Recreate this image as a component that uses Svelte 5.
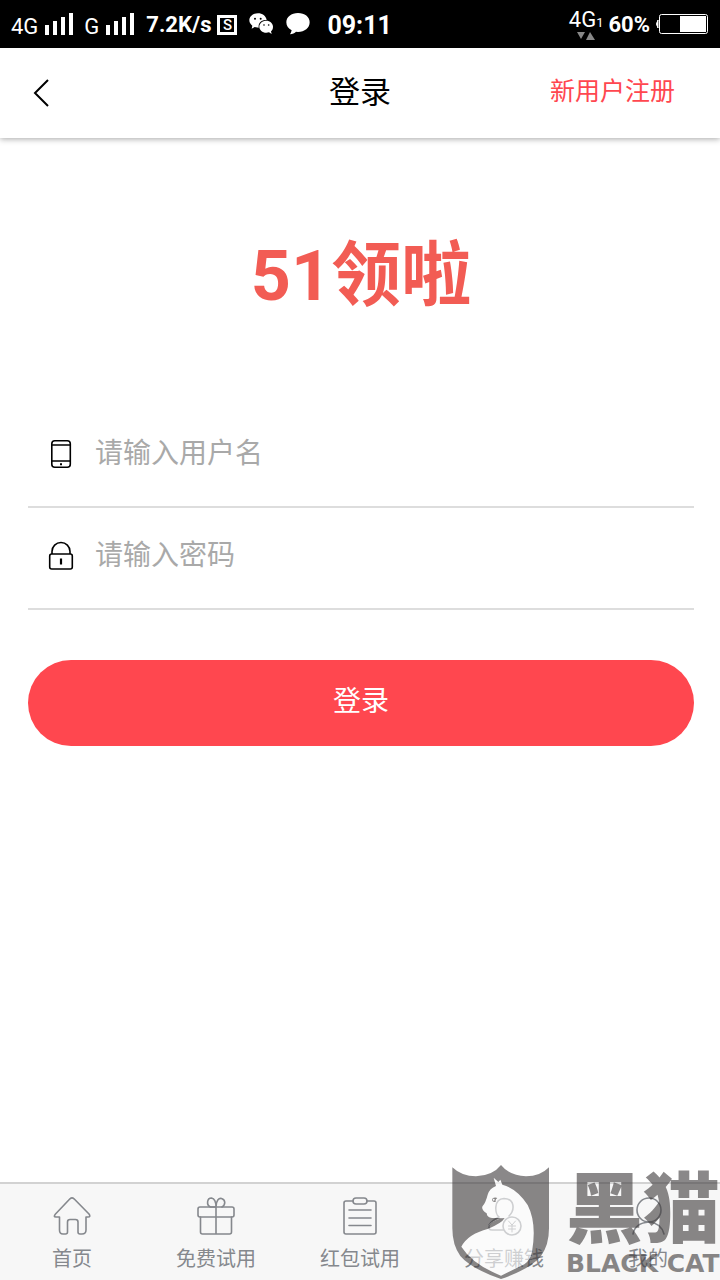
<script>

let username = ''
let password = ''

const tabs = [
    { id: 'home', label: '首页' },
    { id: 'gift', label: '免费试用' },
    { id: 'list', label: '红包试用' },
    { id: 'share', label: '分享赚钱' },
    { id: 'user', label: '我的' }
]

function login() {
    username = username.trim()
}

</script>

<div class="page">
    <div class="status">
        <div class="status-group">
            <span class="network">4G</span>
            <svg class="signal first" viewBox="0 0 28 22"><path d="M0 12h4v10H0zM8 8h4v14H8zM16 4h4v18h-4zM24 0h4v22h-4z" /></svg>
            <span class="network">G</span>
            <svg class="signal" viewBox="0 0 28 22"><path d="M0 12h4v10H0zM8 8h4v14H8zM16 4h4v18h-4zM24 0h4v22h-4z" /></svg>
            <span class="speed">7.2K/s</span>
            <span class="square">S</span>
            <svg class="wechat" viewBox="0 0 72 66">
                <path d="M27 1C12 1 1 10 1 22c0 7 4 12 9 16l-2 9 9-5 12 2C27 29 38 20 53 21 51 9 40 1 27 1z" />
                <path d="M52 23c-12 0-21 8-21 18s9 18 21 18l8-1 8 5-2-8c4-3 6-8 6-14 0-10-9-18-20-18z" />
                <g fill="#000"><circle cx="18" cy="17" r="3" /><circle cx="35" cy="17" r="3" /><circle cx="45" cy="36" r="2.5" /><circle cx="59" cy="36" r="2.5" /></g>
            </svg>
            <svg class="bubble" viewBox="0 0 72 66"><path d="M36 0C16 0 1 12 1 28c0 11 6 19 16 24-1 5-3 9-5 12 8-1 14-4 18-8l6 1c20 0 35-12 35-29S56 0 36 0z" /></svg>
            <span class="clock">09:11</span>
        </div>
        <div class="status-group">
            <div class="mobile">
                <span>4G<small>1</small></span>
                <svg viewBox="0 0 18 8"><path d="M0 0h8L4 7zM9 8l4-8 5 8z" /></svg>
            </div>
            <span class="percent">60%</span>
            <svg class="battery" viewBox="0 0 52 20">
                <path d="M2 6Q-1 10 2 14z" stroke="#fff" />
                <rect x="3.5" y=".5" width="48" height="19" rx="2" fill="none" stroke="#fff" />
                <path d="M24 2h26v16H24z" />
            </svg>
        </div>
    </div>

    <header>
        <button class="back" aria-label="返回">
            <svg viewBox="0 0 16 28"><path d="M15 1L2 14l13 13" /></svg>
        </button>
        <h1>登录</h1>
        <a class="register" href="#register">新用户注册</a>
    </header>

    <main>
        <div class="logo"><span>51</span>领啦</div>
        <form on:submit|preventDefault={login}>
            <div class="field">
                <label for="username" aria-label="用户名">
                    <svg viewBox="0 0 26 30">
                        <rect x="3.8" y="1.8" width="18.500" height="26.5" rx="3" />
                        <path d="M4 6h18M4 22h18" />
                        <path d="M12 25.2h2" stroke-width="2" />
                    </svg>
                </label>
                <input type="text" id="username" placeholder="请输入用户名" bind:value={username}>
            </div>
            <div class="field">
                <label for="password" aria-label="密码">
                    <svg viewBox="0 0 26 30">
                        <path d="M4 13v-2.500a9 9 0 0 1 18 0v2.500" />
                        <rect x="1.7" y="13" width="22.6" height="15" rx="2" />
                        <path d="M13 17.500v6" stroke-width="2.2" />
                    </svg>
                </label>
                <input type="password" id="password" placeholder="请输入密码" bind:value={password}>
            </div>
            <button class="submit" type="submit">登录</button>
        </form>
    </main>

    <nav>
        {#each tabs as tab}
            <a href="#{tab.id}">
                <svg viewBox="0 0 40 40">
                    {#if tab.id === 'home'}
                        <path d="M18 2.8Q20 1 22 2.8L37 18Q39 21 36 21H34V34Q34 38 30 38H28Q26 38 26 36V26Q26 23.5 23.5 23.5H18Q15.5 23.5 15.5 26V36Q15.5 38 13.5 38H11Q7.5 38 7.5 34V21H4Q1 21 3.5 18Z" />
                    {:else if tab.id === 'gift'}
                        <rect x="2" y="11" width="36" height="10" rx="2" />
                        <path d="M4.5 21V36Q4.5 38 6.5 38H33.5Q35.5 38 35.5 36V21M20 11V38M20 11H14.5C10 9 11 2 15.5 2Q20 3 20 11C20 4 23 2 25.5 2.5C30 4 29.5 9 26 11" />
                    {:else if tab.id === 'list'}
                        <path d="M13 5H6Q4 5 4 7V36Q4 38 6 38H34Q36 38 36 36V7Q36 5 34 5H27M9 14H31M9 22H31M9 29.5H31" />
                        <rect x="13" y="2" width="14" height="6" rx="3" />
                    {:else if tab.id === 'share'}
                        <path d="M19 34H8Q4 34 5 29Q7 25 15 21C11 18 9 3 20 2.5C31 3 31 14 25 20" />
                        <circle cx="28" cy="30" r="9" />
                        <path d="M24.5 25l3.5 4 3.5-4M28 29v7M24.5 30h7M24.5 33h7" stroke-width="1" />
                    {:else}
                        <circle cx="21" cy="14" r="12" />
                        <path d="M5 38Q7 27 21 26Q33 27 36 38" />
                    {/if}
                </svg>
                {tab.label}
            </a>
        {/each}
    </nav>

    <div class="watermark">
        <svg viewBox="60 45 300 345">
            <path d="M64 52Q92 79 135 79Q185 77 210 45Q235 77 285 79Q328 79 354 52V235Q354 285 330 318Q300 356 210 387Q120 356 88 318Q64 285 64 235Z" fill="#3e3a3b" />
            <path d="M91 290Q110 252 172 236C166 225 190 207 221 204H183Q168 203 167 190Q149 178 155 168Q164 158 170 134Q176 115 195 108L188 83L202 96L208 89L214 104Q258 116 290 165Q318 220 303 305Q298 330 280 343L210 377Q125 343 91 290Z" fill="#fff" />
            <path d="M172 236C166 225 190 207 221 204Q213 219 172 236ZM183 147q8-7 16-3l-4 4q-2 4-1 8-6 1-10-3z" fill="#3e3a3b" />
            <circle cx="188" cy="149" r="3" fill="#fff" />
        </svg>
        <div class="words">
            <div class="cn">黑猫</div>
            <div class="en">BLACK CAT</div>
        </div>
    </div>
</div>

<style>
:global(body) {
    background: #fff;
}
.page {
    position: relative;
    display: flex;
    flex-direction: column;
    min-height: 100vh;
    font-family: Roboto, "Noto Sans CJK SC", sans-serif;
    color: #000;
}
button,
input {
    font-family: inherit;
    border: none;
    background: none;
    padding: 0;
}
a {
    text-decoration: none;
}
.status {
    display: flex;
    justify-content: space-between;
    align-items: center;
    height: 48px;
    padding: 0 12px 0 11px;
    background: #000;
    color: #fff;
    fill: #fff;
}
.status-group {
    display: flex;
    align-items: center;
    line-height: 28px;
}
.network {
    font-size: 22px;
    padding-top: 6px;
}
.signal {
    width: 28px;
    height: 22px;
    margin: 0 12px 0 7px;
}
.signal.first {
    margin-right: 11px;
}
.speed {
    font-size: 22px;
    font-weight: 700;
    padding-top: 2px;
}
.square {
    box-sizing: border-box;
    width: 20px;
    height: 20px;
    margin: 2px 12px 0 6px;
    border: 3px solid #fff;
    font-size: 15px;
    font-weight: 500;
    line-height: 14px;
    text-align: center;
}
.wechat,
.bubble {
    width: 24px;
    height: 22px;
    margin-right: 13px;
}
.bubble {
    margin-right: 17px;
}
.clock {
    font-size: 25px;
    font-weight: 700;
    padding-top: 3px;
}
.mobile {
    display: flex;
    flex-direction: column;
    align-items: center;
    margin-right: 5px;
    padding-top: 2px;
    font-size: 22px;
    line-height: 18px;
}
.mobile small {
    font-size: 13px;
}
.mobile svg {
    width: 18px;
    height: 8px;
    fill: #888;
}
.percent {
    font-size: 22px;
    font-weight: 700;
    padding-top: 2px;
}
.battery {
    width: 52px;
    height: 20px;
    margin-left: 6px;
}
header {
    display: grid;
    grid-template-columns: 1fr auto 1fr;
    align-items: center;
    height: 90px;
    padding: 0 45px 0 33px;
    box-shadow: 0 1px 6px rgba(0, 0, 0, 0.35);
}
.back {
    justify-self: start;
    height: 28px;
    cursor: pointer;
}
.back svg {
    display: block;
    width: 16px;
    height: 28px;
    fill: none;
    stroke: #000;
    stroke-width: 2;
}
h1 {
    margin: 0 0 0 12px;
    font-size: 31px;
    font-weight: 400;
    line-height: 44px;
}
.register {
    justify-self: end;
    padding-bottom: 8px;
    color: #ff474f;
    font-size: 25px;
}
main {
    flex: 1;
    padding: 78px 26px 0 28px;
}
.logo {
    height: 110px;
    margin-bottom: 80px;
    color: #f25c54;
    font-size: 70px;
    font-weight: 700;
    line-height: 120px;
    text-align: center;
}
.field {
    display: flex;
    box-sizing: border-box;
    height: 102px;
    padding: 0 20px;
    border-bottom: 2px solid #ddd;
}
.field label {
    padding-top: 33px;
    margin-right: 21px;
}
.field svg {
    display: block;
    width: 26px;
    height: 30px;
    fill: none;
    stroke: #000;
    stroke-width: 1.6;
}
.field input {
    flex: 1;
    min-width: 0;
    height: 94px;
    font-size: 28px;
    outline: none;
}
.field input::placeholder {
    color: #a9a9a9;
    opacity: 1;
}
.submit {
    width: 100%;
    height: 86px;
    margin-top: 50px;
    padding-bottom: 8px;
    border-radius: 43px;
    background: #ff474f;
    color: #fff;
    font-size: 28px;
    cursor: pointer;
}
nav {
    display: flex;
    box-sizing: border-box;
    height: 98px;
    border-top: 2px solid #d2d2d2;
    background: #f7f7f7;
}
nav a {
    flex: 1;
    display: flex;
    flex-direction: column;
    align-items: center;
    padding-top: 12px;
    color: #85888d;
    font-size: 20px;
    line-height: 46px;
}
nav svg {
    flex: none;
    width: 40px;
    height: 40px;
    fill: none;
    stroke: #85888d;
    stroke-width: 1.6;
    stroke-linecap: round;
    stroke-linejoin: round;
}
.watermark {
    position: absolute;
    right: 0;
    bottom: 0;
    display: flex;
    opacity: 0.6;
    color: #3e3a3b;
    pointer-events: none;
}
.watermark svg {
    width: 100px;
    height: 115px;
}
.words {
    margin-left: 15px;
    white-space: nowrap;
}
.cn {
    font-family: "Noto Sans CJK SC", sans-serif;
    font-size: 77px;
    font-weight: 900;
    line-height: 78px;
}
.en {
    padding-top: 6px;
    font-family: "DejaVu Sans", sans-serif;
    font-size: 25px;
    font-weight: 700;
    line-height: 30px;
}
</style>
